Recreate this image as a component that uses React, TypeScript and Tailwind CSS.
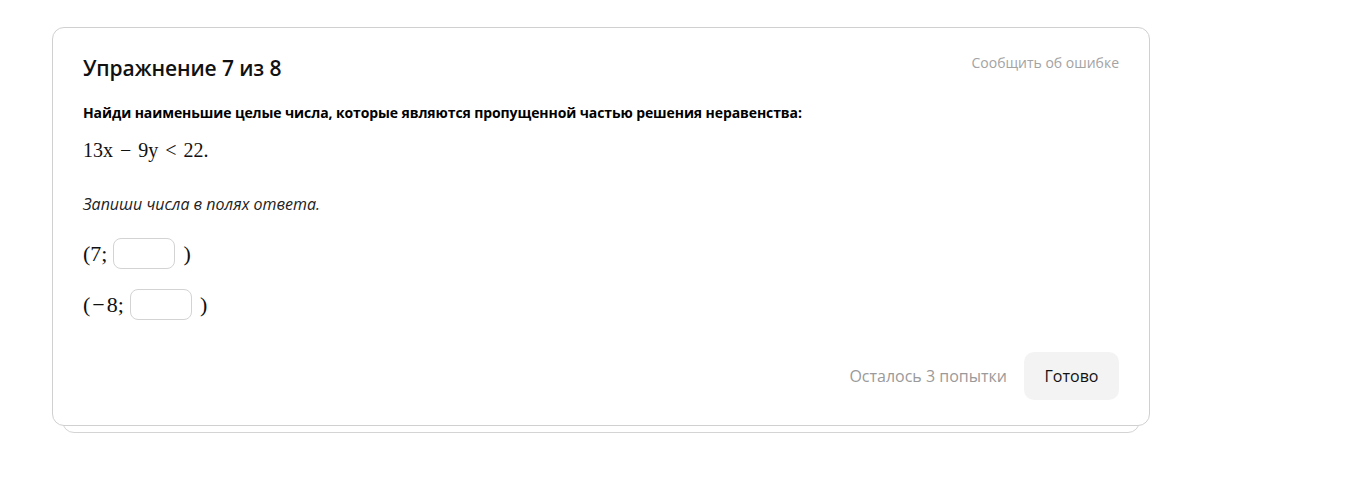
import React from "react"

const sans = { fontFamily: '"Open Sans", "Noto Sans", sans-serif' }
const serif = { fontFamily: '"Liberation Serif", "DejaVu Serif", serif' }

// Answer input box
const AnswerBox = () => (
  <input
    type="text"
    className="w-[62px] h-[31px] ml-[6px] rounded-[8px] border border-[#d3d3d3] bg-white outline-none"
  />
)

export default function App() {
  return (
    <div className="min-h-[481px] bg-white pt-[27px] pl-[52px]">
      <div className="relative w-[1098px]">
        {/* Stacked card behind */}
        <div className="absolute left-[10px] right-[10px] top-[20px] -bottom-[7px] rounded-[12px] border border-[#d4d4d4] bg-white" />

        <div className="relative h-[399px] rounded-[12px] border border-[#d0d0d0] bg-white px-[30px] pt-[26px] flex flex-col" style={sans}>
          <div className="flex items-start justify-between">
            <h1 className="text-[21px] leading-[28px] font-semibold text-[#111] tracking-[-0.1px]">Упражнение 7 из 8</h1>
            <button className="mt-0 text-[14px] leading-[18px] text-[#a3a3a3]">Сообщить об ошибке</button>
          </div>

          <p className="mt-[21px] text-[14px] leading-[20px] font-bold text-black tracking-[-0.1px]">
            Найди наименьшие целые числа, которые являются пропущенной частью решения неравенства:
          </p>

          <p className="mt-[15px] flex items-baseline text-[20px] leading-[24px] text-[#111]" style={serif}>
            <span>13x</span>
            <span className="mx-[7px]">&minus;</span>
            <span>9y</span>
            <span className="mx-[7px]">&lt;</span>
            <span>22.</span>
          </p>

          <p className="mt-[31px] text-[16px] leading-[22px] italic text-[#222]">Запиши числа в полях ответа.</p>

          <div className="mt-[23px] flex flex-col gap-[20px] text-[22px] leading-[31px] text-[#111]" style={serif}>
            <div className="flex items-center">
              <span>(7;</span>
              <AnswerBox />
              <span className="ml-[8px]">)</span>
            </div>
            <div className="flex items-center">
              <span>(<span className="mx-[2px]">&minus;</span>8;</span>
              <AnswerBox />
              <span className="ml-[8px]">)</span>
            </div>
          </div>

          <div className="mt-auto mb-[25px] flex items-center justify-end gap-[17px]">
            <span className="text-[16px] text-[#9a9a9a]">Осталось 3 попытки</span>
            <button className="w-[95px] h-[48px] rounded-[10px] bg-[#f3f3f3] text-[16px] text-[#111]">Готово</button>
          </div>
        </div>
      </div>
    </div>
  )
}
